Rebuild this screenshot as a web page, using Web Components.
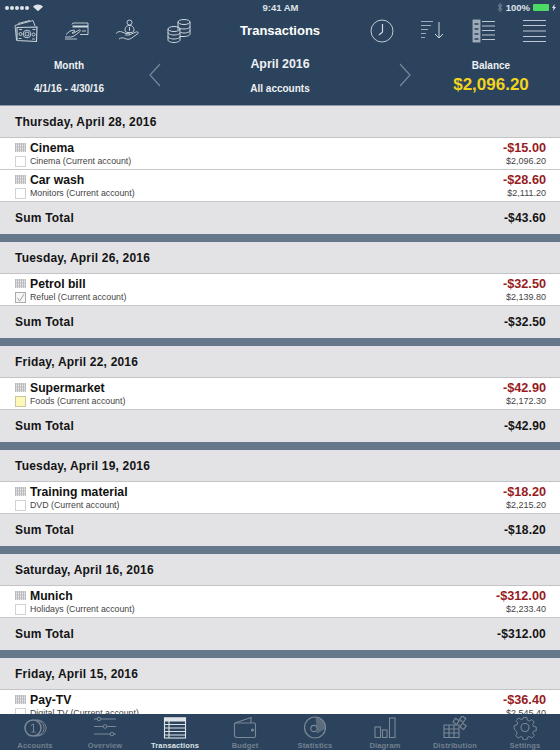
<!doctype html>
<html>
<head>
<meta charset="utf-8">
<style>
  html, body { margin: 0; height: 100%; }
  body { font-family: "Liberation Sans", Arial, sans-serif; overflow: hidden; }
  budget-app { height: 750px; }
</style>
</head>
<body>
<budget-app></budget-app>
<script>
const ICONS = {
  cash: `<svg width="26" height="26" viewBox="0 0 26 26" fill="none" stroke="currentColor" stroke-width=".9"><path d="M2 7.500 20 2.500l2 5.500"/><path d="M5 5.500l12-3"/><path d="M2 7.500 3.500 22"/><path d="M4 9.500 24 9l-.5 14.500-19.500-1z" stroke-width="1.100"/><circle cx="14" cy="16" r="3.800"/><circle cx="14" cy="16" r="2"/><circle cx="7.500" cy="16" r="1.500"/><circle cx="20.500" cy="16.500" r="1.500"/><path d="M6 11.500h3M19 21h3M5.500 20.500h3M19.500 11.500h3"/></svg>`,
  card: `<svg width="26" height="26" viewBox="0 0 26 26" fill="none" stroke="currentColor" stroke-width=".9"><path d="M8 6.500 9 5h15v11.500h-8"/><path d="M8.500 8.500H24" stroke-width="2"/><path d="M18 13h4"/><path d="M1 19h6l3-1 6-4.500c1-1 0-2-1-1.500l-5 3H8l3-2-1-1-4 1-4 3.500"/><path d="M1 21h12"/></svg>`,
  hand: `<svg width="26" height="26" viewBox="0 0 26 26" fill="none" stroke="currentColor" stroke-width=".9"><circle cx="14.500" cy="4.500" r="2.500"/><path d="M13 7.500c-2 1-3 2.500-3 4.500 0 1.500 1 2.500 3 2.500h3c2 0 3-1 3-2.500 0-2-1-3.500-3-4.500z"/><path d="M14.500 9v4"/><path d="M1 15.500c2-2 4-2.500 6-1.500l4 1.500h3c1 0 1 1.500 0 1.500h-4"/><path d="M14 17l7-3c2-.5 3 .5 2 1.500l-7 5c-2 1-4 1-6 0s-4-1-6 .5"/></svg>`,
  coins: `<svg width="26" height="26" viewBox="0 0 26 26" fill="none" stroke="currentColor" stroke-width="1"><ellipse cx="18" cy="4" rx="6" ry="2.500"/><path d="M12 4v8M24 4v12c0 1.400-2.500 2.500-6 2.500h-4"/><path d="M12 8.500c0 1.400 2.700 2.500 6 2.500s6-1.100 6-2.500M15 14.500c1 .4 2 .5 3 .5 3.300 0 6-1.100 6-2.500"/><ellipse cx="8" cy="11" rx="6" ry="2.500"/><path d="M2 11v11c0 1.400 2.700 2.500 6 2.500s6-1.100 6-2.500V11"/><path d="M2 14.500c0 1.400 2.700 2.500 6 2.500s6-1.100 6-2.500M2 18.500c0 1.400 2.700 2.500 6 2.500s6-1.100 6-2.500"/></svg>`,
  clock: `<svg width="26" height="26" viewBox="0 0 26 26" fill="none" stroke="currentColor" stroke-width=".9"><circle cx="13" cy="13" r="11"/><path d="M13.500 6v8l-3.500 3" stroke-width="1.200"/></svg>`,
  sort: `<svg width="26" height="26" viewBox="0 0 26 26" fill="none" stroke="currentColor" stroke-width="1"><path d="M1 3.500h12M1 7.500h10M1 11.500h7M1 15.500h5M1 19.500h4" opacity=".7"/><path d="M19 4v16M15 16l4 4 4-4"/></svg>`,
  checklist: `<svg width="26" height="26" viewBox="0 0 26 26" fill="none" stroke="currentColor" stroke-width=".9"><rect x="2" y="2" width="7" height="22" fill="currentColor" opacity=".7"/><path d="M3.500 6h4M3.500 11h4M3.500 16h4M3.500 21h4" stroke="#2b435c" stroke-width="1.500"/><path d="M11 3.500h13M11 8h13M11 12.500h13M11 17h13M11 21.500h13"/></svg>`,
  menu: `<svg width="26" height="26" viewBox="0 0 26 26" fill="none" stroke="currentColor" stroke-width=".9"><path d="M1 2.500h23M1 7.500h23M1 13h23M1 18.500h23M1 23.500h23"/></svg>`,
  accounts: `<svg width="24" height="24" viewBox="0 0 24 24" fill="none" stroke="currentColor" stroke-width="1"><path d="M14 4c5 0 9 3.500 9 8s-4 8-9 8"/><path d="M12 4c5 0 9 3.500 9 8s-4 8-9 8"/><circle cx="10" cy="12" r="8" stroke-width="1.500"/><path d="M8 9.500l2.500-1.500V16M8.500 16h4"/></svg>`,
  overview: `<svg width="24" height="24" viewBox="0 0 24 24" fill="none" stroke="currentColor" stroke-width="1"><path d="M1 3h22M1 10.500h22M1 18h22"/><circle cx="6" cy="3" r="1.800" fill="#2b435c"/><circle cx="12" cy="10.500" r="1.800" fill="#2b435c"/><circle cx="19" cy="18" r="1.800" fill="#2b435c"/></svg>`,
  transactions: `<svg width="24" height="24" viewBox="0 0 24 24" fill="none" stroke="currentColor" stroke-width="1.100"><rect x="1.500" y="2" width="21" height="20"/><path d="M1.500 2h21v3h-21z" fill="currentColor"/><path d="M1.500 8.500h21M1.500 12h21M1.500 15.500h21M1.500 19h21M6 5v17"/></svg>`,
  budget: `<svg width="24" height="24" viewBox="0 0 24 24" fill="none" stroke="currentColor" stroke-width="1.100"><path d="M2 7 18 1.500V7"/><path d="M2 7h19c1 0 1.500.5 1.500 1.500V20c0 1-.5 1.500-1.500 1.500H4c-1.500 0-2.500-1-2.500-2.500V7"/><circle cx="19.500" cy="14" r="1" fill="currentColor"/></svg>`,
  statistics: `<svg width="24" height="24" viewBox="0 0 24 24" fill="none" stroke="currentColor" stroke-width="1.200"><circle cx="12" cy="11.500" r="10.500"/><circle cx="11" cy="12.500" r="3.200"/><path d="M13 1.500a10.500 10.500 0 0 1 9.500 10.500l-8.500 5c2-2 2-6 0-8z" fill="currentColor" opacity=".6"/></svg>`,
  diagram: `<svg width="24" height="24" viewBox="0 0 24 24" fill="none" stroke="currentColor" stroke-width="1.100"><rect x="2" y="11" width="5.500" height="10.500"/><rect x="9.500" y="14" width="4.500" height="7.500"/><rect x="16.500" y="2" width="5.500" height="19.500"/></svg>`,
  distribution: `<svg width="24" height="24" viewBox="0 0 24 24" fill="none" stroke="currentColor" stroke-width="1.100"><path d="M1 9h15v12.500H1zM1 13h15M1 17h15M6 9v12.500M11 9v12.500"/><rect x="11" y="3" width="4.500" height="4.500" transform="rotate(35 13 5)"/><rect x="17.500" y="1" width="4.500" height="4.500" transform="rotate(35 20 3)"/><rect x="18" y="8" width="4.500" height="4.500" transform="rotate(35 20 10)"/></svg>`,
  settings: `<svg width="24" height="24" viewBox="0 0 24 24" fill="none" stroke="currentColor" stroke-width="1.100"><path d="M10 1h4l.7 3.200 2 .9 2.800-1.700 2.800 2.800-1.700 2.800.9 2 3 .7v4l-3 .7-.9 2 1.700 2.800-2.800 2.800-2.800-1.700-2 .9-.7 2.800h-4l-.7-2.800-2-.9-2.800 1.700-2.800-2.800 1.700-2.800-.9-2L0 14v-4l3-.7.9-2-1.700-2.800L5 1.700l2.800 1.700 2-.9z" transform="translate(1.200 .5) scale(.9)"/><circle cx="12" cy="11.500" r="4"/></svg>`
};

class StatusBar extends HTMLElement {
  constructor() {
    super();
    this.attachShadow({ mode: 'open' }).innerHTML = `
      <style>
        :host { display: grid; grid-template-columns: 1fr auto 1fr; align-items: center; height: 15px; padding: 0 4px 0 5px; color: #dfe4ea; font-size: 9.500px; font-weight: bold; }
        .left { display: flex; align-items: center; gap: 1px; }
        .dot { width: 4px; height: 4px; border-radius: 50%; background: #dfe4ea; }
        .right { display: flex; align-items: center; justify-content: flex-end; gap: 3px; }
        .battery { width: 16px; height: 7px; background: #4cd964; border-radius: 1px; }
      </style>
      <div class="left">
        <i class="dot"></i><i class="dot"></i><i class="dot"></i><i class="dot"></i><i class="dot"></i>
        <svg width="10" height="8" viewBox="0 0 11 8" style="margin-left:3px"><path d="M5.500 7.500 0 2.500C3 -.5 8 -.5 11 2.500z" fill="#dfe4ea"/></svg>
      </div>
      <div>9:41 AM</div>
      <div class="right">
        <svg width="6" height="9" viewBox="0 0 6 9" fill="none" stroke="#7b8a9a"><path d="M1 2l4 4.500L3 8.500V.5l2 2L1 7"/></svg>
        <span>100%</span><i class="battery"></i>
        <svg width="4" height="7" viewBox="0 0 4 7"><path d="M2.500 0 0 4h1.500L1 7l3-4H2.300z" fill="#dfe4ea"/></svg>
      </div>`;
  }
}

class AppHeader extends HTMLElement {
  constructor() {
    super();
    const icon = (n)=>`<div class="icon">${ICONS[n]}</div>`;
    this.attachShadow({ mode: 'open' }).innerHTML = `
      <style>
        :host { display: block; flex: none; height: 106px; background: #2b435c; color: #fff; font-weight: bold; box-sizing: border-box; border-bottom: 1px solid #8d9aaa; }
        .tools { display: grid; grid-template-columns: repeat(4, 51px) 1fr repeat(4, 51px); align-items: center; height: 31px; }
        .icon { display: flex; justify-content: center; color: #d0d7df; }
        .title { text-align: center; font-size: 13px; }
        .info { display: grid; grid-template-columns: 138px 34px 1fr 34px 138px; margin-top: 4px; }
        .col { display: flex; flex-direction: column; align-items: center; font-size: 10px; color: #eef0f3; }
        .chev { display: flex; justify-content: center; color: #77889a; padding-top: 13px; }
        .month { padding-top: 10px; gap: 12px; }
        .mid { font-size: 10px; padding-top: 7px; gap: 12px; }
        .mid b { font-size: 12.400px; }
        .bal { padding-top: 10px; gap: 4px; }
        .bal b { font-size: 17px; color: #f2d41f; line-height: 20px; }
      </style>
      <status-bar></status-bar>
      <div class="tools">
        ${icon('cash')}${icon('card')}${icon('hand')}${icon('coins')}
        <div class="title">Transactions</div>
        ${icon('clock')}${icon('sort')}${icon('checklist')}${icon('menu')}
      </div>
      <div class="info">
        <div class="col month"><span>Month</span><span>4/1/16 - 4/30/16</span></div>
        <div class="chev"><svg width="12" height="24" viewBox="0 0 12 24" fill="none" stroke="currentColor" stroke-width="1.200"><path d="M11 1 1 12l10 11"/></svg></div>
        <div class="col mid"><b>April 2016</b><span>All accounts</span></div>
        <div class="chev"><svg width="12" height="24" viewBox="0 0 12 24" fill="none" stroke="currentColor" stroke-width="1.200"><path d="M1 1l10 11L1 23"/></svg></div>
        <div class="col bal"><span>Balance</span><b>$2,096.20</b></div>
      </div>`;
  }
}

class TxGroup extends HTMLElement {
  constructor() {
    super();
    this.attachShadow({ mode: 'open' }).innerHTML = `
      <style>
        :host { display: block; }
        .band { display: flex; align-items: center; justify-content: space-between; height: 32px; box-sizing: border-box; padding: 0 14px 0 15px; background: #e3e3e6; color: #141414; font-size: 12px; font-weight: bold; letter-spacing: .2px; }
        .date { border-bottom: 1px solid #c4c4c6; }
        .sep { height: 8px; background: #65778a; }
      </style>
      <div class="band date"></div>
      <slot></slot>
      <div class="band"><span>Sum Total</span><span class="sum"></span></div>
      <div class="sep"></div>`;
    this.shadowRoot.querySelector('.date').textContent = this.getAttribute('date');
    this.shadowRoot.querySelector('.sum').textContent = this.getAttribute('sum');
  }
}

class TxRow extends HTMLElement {
  constructor() {
    super();
    const state = this.getAttribute('state') || '';
    this.attachShadow({ mode: 'open' }).innerHTML = `
      <style>
        :host { display: grid; grid-template-columns: 11px 1fr auto; column-gap: 4px; height: 32px; box-sizing: border-box; padding: 2px 14px 0 15px; background: #fff; border-bottom: 1px solid #c8c8ca; grid-template-rows: 15px 12px; align-items: center; }
        .grip { width: 11px; height: 9px; background-color: #d4d4d6; background-image: repeating-linear-gradient(90deg, #bcbcbe 0 1px, transparent 1px 2px), repeating-linear-gradient(0deg, #e8e8ea 0 1px, transparent 1px 3px); }
        .name { font-size: 12.200px; font-weight: bold; color: #111; }
        .amount { font-size: 12.700px; font-weight: bold; color: #971b23; text-align: right; }
        .box { box-sizing: border-box; width: 11px; height: 11px; border: 1px solid #d2d2d4; background: #fff; display: flex; }
        .box.paid { background: #f6f6f6; border-color: #aaa; }
        .box.flag { background: #fdf8b8; border-color: #c9c7a0; }
        .note { font-size: 8.800px; color: #444; }
        .bal { font-size: 9px; color: #444; text-align: right; }
      </style>
      <i class="grip"></i>
      <span class="name"></span>
      <span class="amount"></span>
      <i class="box ${state}">${state === 'paid' ? '<svg width="9" height="9" viewBox="0 0 10 10" fill="none" stroke="#999"><path d="M1.500 5.500 4 9 9 1"/></svg>' : ''}</i>
      <span class="note"></span>
      <span class="bal"></span>`;
    for (const key of ['name', 'amount', 'note', 'bal']) {
      this.shadowRoot.querySelector('.' + key).textContent = this.getAttribute(key);
    }
  }
}

class TabBar extends HTMLElement {
  constructor() {
    super();
    const tabs = [['accounts','Accounts'],['overview','Overview'],['transactions','Transactions'],['budget','Budget'],['statistics','Statistics'],['diagram','Diagram'],['distribution','Distribution'],['settings','Settings']];
    this.attachShadow({ mode: 'open' }).innerHTML = `
      <style>
        :host { display: grid; grid-template-columns: repeat(8, 70px); flex: none; height: 36px; background: #2b435c; }
        .tab { display: flex; flex-direction: column; align-items: center; color: #7c8896; font-size: 7.500px; font-weight: bold; letter-spacing: .15px; padding-top: 2px; gap: 1px; }
        .tab.on { color: #dfe3e8; }
        span { line-height: 9px; opacity: .9; }
        .on span { opacity: 1; }
      </style>
      ${tabs.map(([icon, label])=>`<div class="tab ${icon === 'transactions' ? 'on' : ''}">${ICONS[icon]}<span>${label}</span></div>`).join('')}`;
  }
}

class BudgetApp extends HTMLElement {
  constructor() {
    super();
    this.attachShadow({ mode: 'open' }).innerHTML = `
      <style>
        :host { display: flex; flex-direction: column; width: 560px; overflow: hidden; }
        .list { flex: 1; min-height: 0; overflow: hidden; background: #e3e3e6; }
      </style>
      <app-header></app-header>
      <div class="list">
        <tx-group date="Thursday, April 28, 2016" sum="-$43.60">
          <tx-row name="Cinema" note="Cinema (Current account)" amount="-$15.00" bal="$2,096.20"></tx-row>
          <tx-row name="Car wash" note="Monitors (Current account)" amount="-$28.60" bal="$2,111.20"></tx-row>
        </tx-group>
        <tx-group date="Tuesday, April 26, 2016" sum="-$32.50">
          <tx-row name="Petrol bill" note="Refuel (Current account)" amount="-$32.50" bal="$2,139.80" state="paid"></tx-row>
        </tx-group>
        <tx-group date="Friday, April 22, 2016" sum="-$42.90">
          <tx-row name="Supermarket" note="Foods (Current account)" amount="-$42.90" bal="$2,172.30" state="flag"></tx-row>
        </tx-group>
        <tx-group date="Tuesday, April 19, 2016" sum="-$18.20">
          <tx-row name="Training material" note="DVD (Current account)" amount="-$18.20" bal="$2,215.20"></tx-row>
        </tx-group>
        <tx-group date="Saturday, April 16, 2016" sum="-$312.00">
          <tx-row name="Munich" note="Holidays (Current account)" amount="-$312.00" bal="$2,233.40"></tx-row>
        </tx-group>
        <tx-group date="Friday, April 15, 2016" sum="-$36.40">
          <tx-row name="Pay-TV" note="Digital TV (Current account)" amount="-$36.40" bal="$2,545.40"></tx-row>
        </tx-group>
      </div>
      <tab-bar></tab-bar>`;
  }
}

customElements.define('status-bar', StatusBar);
customElements.define('app-header', AppHeader);
customElements.define('tx-group', TxGroup);
customElements.define('tx-row', TxRow);
customElements.define('tab-bar', TabBar);
customElements.define('budget-app', BudgetApp);
</script>
</body>
</html>
